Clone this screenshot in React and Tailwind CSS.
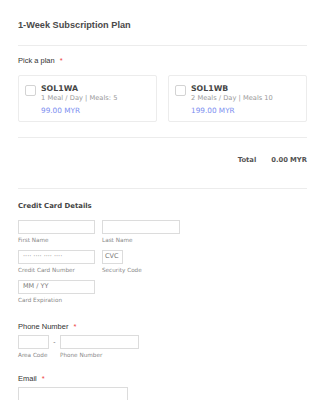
const dv = { fontFamily: '"DejaVu Sans", Verdana, sans-serif' };
const ls = { fontFamily: '"Liberation Sans", Arial, sans-serif' };

const Input = ({ className = "", placeholder }) => (
  <div
    className={`h-[14px] border border-[#dcdcdc] bg-white text-[6.5px] text-[#7a7a7a] flex items-center px-[4px] ${className}`}
    style={dv}
  >
    {placeholder}
  </div>
);

const Sub = ({ children }) => (
  <div className="text-[5.7px] leading-[9px] text-[#888] mt-[2px]" style={dv}>
    {children}
  </div>
);

const Label = ({ children, className = "" }) => (
  <div className={`text-[7.5px] leading-[10px] text-[#333] ${className}`} style={ls}>
    {children} <span className="text-[#e44] ml-[3px]">*</span>
  </div>
);

const Plan = ({ code, desc, price }) => (
  <div className="flex-1 h-[47px] border border-[#ececec] rounded-[2px] bg-white flex pt-[8px] pl-[6px]">
    <div className="w-[11px] h-[11px] border border-[#d3d3d3] rounded-[2px] mt-[1px]" />
    <div className="ml-[5px]" style={dv}>
      <div className="text-[7.8px] font-bold text-[#444] leading-[10px]">{code}</div>
      <div className="text-[6.7px] text-[#999] leading-[9px]">{desc}</div>
      <div className="text-[7.3px] text-[#7b8ef0] leading-[9px] mt-[3px]">{price}</div>
    </div>
  </div>
);

const App = () => {
  return (
    <div className="w-[325px] h-[400px] bg-white overflow-hidden px-[18px]">
      <div className="pt-[19px] text-[9.2px] leading-[12px] font-bold text-[#4a4a4a]" style={ls}>
        1-Week Subscription Plan
      </div>
      <div className="mt-[14px] border-t border-[#ececec]" />

      <Label className="mt-[10px]">Pick a plan</Label>
      <div className="flex gap-[11px] mt-[9px]">
        <Plan code="SOL1WA" desc="1 Meal / Day | Meals: 5" price="99.00 MYR" />
        <Plan code="SOL1WB" desc="2 Meals / Day | Meals 10" price="199.00 MYR" />
      </div>

      <div className="mt-[15px] border-t border-[#ececec]" />
      <div
        className="flex justify-end mt-[17px] text-[6.8px] leading-[10px] font-bold text-[#555]"
        style={dv}
      >
        <span>Total</span>
        <span className="ml-[15px]">0.00</span>
        <span className="ml-[2px]">MYR</span>
      </div>
      <div className="mt-[23px] border-t border-[#ececec]" />

      <div className="mt-[12px] text-[6.9px] leading-[10px] font-bold text-[#444]" style={dv}>
        Credit Card Details
      </div>

      <div className="flex gap-[7px] mt-[9px]">
        <div>
          <Input className="w-[77px]" />
          <Sub>First Name</Sub>
        </div>
        <div>
          <Input className="w-[78px]" />
          <Sub>Last Name</Sub>
        </div>
      </div>

      <div className="flex gap-[7px] mt-[5px]">
        <div>
          <Input className="w-[77px]" placeholder="···· ···· ···· ····" />
          <Sub>Credit Card Number</Sub>
        </div>
        <div>
          <Input className="w-[21px] !px-[2px]" placeholder="CVC" />
          <Sub>Security Code</Sub>
        </div>
      </div>

      <div className="mt-[5px]">
        <Input className="w-[77px]" placeholder="MM / YY" />
        <Sub>Card Expiration</Sub>
      </div>

      <Label className="mt-[17px]">Phone Number</Label>
      <div className="flex mt-[3px]">
        <div>
          <Input className="w-[31px]" />
          <Sub>Area Code</Sub>
        </div>
        <div className="w-[11px] text-center text-[7px] text-[#777] leading-[14px]">-</div>
        <div>
          <Input className="w-[79px]" />
          <Sub>Phone Number</Sub>
        </div>
      </div>

      <Label className="mt-[14px]">Email</Label>
      <div className="mt-[3px]">
        <Input className="w-[110px]" />
      </div>
    </div>
  );
};

export default App;
